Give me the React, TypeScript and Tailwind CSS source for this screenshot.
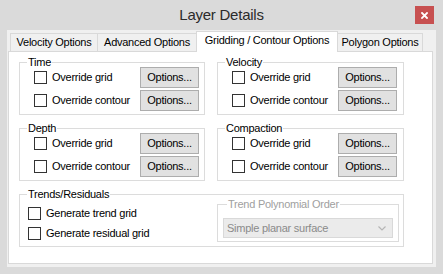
const font = "font-['Liberation_Sans',Arial,sans-serif]"

function Check({ label }: { label: string }) {
  return (
    <div className="flex items-center gap-[5px] h-[13px]">
      <span className="w-[13px] h-[13px] border border-[#333333] bg-white shrink-0" />
      <span className="text-[11px] leading-[13px] tracking-[-0.25px] text-black whitespace-nowrap">{label}</span>
    </div>
  )
}

function OptRow({ label }: { label: string }) {
  return (
    <div className="flex items-center">
      <div className="w-[120px] pl-[14px]">
        <Check label={label} />
      </div>
      <button className="w-[59px] h-[21px] bg-[#e1e1e1] border border-[#adadad] text-[11px] tracking-[-0.25px] text-black">
        Options...
      </button>
    </div>
  )
}

function Group({ title, className = '', children }: { title: string; className?: string; children: React.ReactNode }) {
  return (
    <div className={`relative border border-[#dcdcdc] ${className}`}>
      <span className="absolute left-[7px] -top-[8px] px-[1px] bg-white text-[11px] leading-[14px] tracking-[-0.25px] text-black">
        {title}
      </span>
      {children}
    </div>
  )
}

function OverrideGroup({ title }: { title: string }) {
  return (
    <Group title={title} className="h-[53px] pt-[4px] flex flex-col gap-[2px]">
      <OptRow label="Override grid" />
      <OptRow label="Override contour" />
    </Group>
  )
}

const tabs = [
  { name: 'Velocity Options', w: 'w-[88px]' },
  { name: 'Advanced Options', w: 'w-[100px]' },
  { name: 'Gridding / Contour Options', w: 'w-[142px]', active: true },
  { name: 'Polygon Options', w: 'w-[86px]' },
]

export default function App() {
  return (
    <div className={`w-[443px] h-[274px] bg-[#dadada] flex flex-col ${font}`}>
      {/* title bar */}
      <div className="h-[30px] grid grid-cols-[1fr_auto_1fr] items-start shrink-0">
        <div />
        <div className="pt-[5px] text-[15px] leading-[20px] tracking-[-0.25px] text-[#2b2b2b]">Layer Details</div>
        <div className="flex justify-end pr-[9px] pt-[6px]">
          <div className="w-[19px] h-[18px] bg-[#c75050] flex items-center justify-center">
            <svg width="7" height="7" viewBox="0 0 7 7">
              <path d="M1 1 L6 6 M6 1 L1 6" stroke="white" strokeWidth="1.8" strokeLinecap="square" />
            </svg>
          </div>
        </div>
      </div>

      {/* client area */}
      <div className="mx-[7px] h-[237px] bg-[#f0f0f0] pt-[1px] flex flex-col">
        <div className="relative z-10 -mb-px h-[21px] pl-[3px] flex items-end">
          {tabs.map((t, i) => (
            <div
              key={t.name}
              className={`${t.w} ${i > 0 ? '-ml-px' : ''} flex items-center justify-center text-[11px] tracking-[-0.25px] text-black whitespace-nowrap ${
                t.active
                  ? 'relative h-[21px] bg-white border border-b-0 border-[#d9d9d9] pb-[3px]'
                  : 'h-[19px] bg-[#f0f0f0] border border-[#d9d9d9]'
              }`}
            >
              {t.name}
            </div>
          ))}
        </div>

        <div className="ml-[1px] w-[425px] h-[213px] bg-white border border-[#d9d9d9] pl-[10px] pt-[10px]">
          <div className="grid grid-cols-[186px_187px] gap-x-[12px] gap-y-[13px]">
            <OverrideGroup title="Time" />
            <OverrideGroup title="Velocity" />
            <OverrideGroup title="Depth" />
            <OverrideGroup title="Compaction" />
            <Group title="Trends/Residuals" className="col-span-2 h-[53px] flex pt-[9px] pr-[4px]">
              <div className="pl-[8px] pt-[3px] flex flex-col gap-[7px]">
                <Check label="Generate trend grid" />
                <Check label="Generate residual grid" />
              </div>
              <div className="ml-auto relative w-[182px] h-[38px] border border-[#dcdcdc] pt-[13px] px-[5px]">
                <span className="absolute left-[9px] -top-[8px] px-[1px] bg-white text-[11px] leading-[14px] tracking-[-0.25px] text-[#a0a0a0]">
                  Trend Polynomial Order
                </span>
                <div className="h-[20px] bg-[#ebebeb] border border-[#d9d9d9] flex items-center pl-[3px] pr-[6px]">
                  <span className="flex-1 text-[11px] tracking-[-0.25px] text-[#8a8a8a]">Simple planar surface</span>
                  <svg width="8" height="5" viewBox="0 0 8 5">
                    <path d="M0.5 0.5 L4 4 L7.5 0.5" stroke="#b5b5b5" strokeWidth="1.2" fill="none" />
                  </svg>
                </div>
              </div>
            </Group>
          </div>
        </div>
      </div>
    </div>
  )
}
